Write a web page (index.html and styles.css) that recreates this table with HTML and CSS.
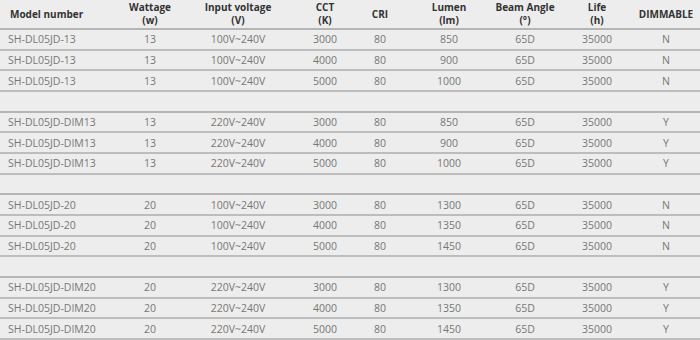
FILE: index.html
```html
<!DOCTYPE html>
<html lang="en">
<head>
  <meta charset="UTF-8">
  <title>SH-DL05JD Specifications</title>
  <link rel="stylesheet" href="styles.css">
</head>
<body>
  <table class="spec-table">
    <colgroup>
      <col class="col-model">
      <col class="col-watt">
      <col class="col-volt">
      <col class="col-cct">
      <col class="col-cri">
      <col class="col-lumen">
      <col class="col-beam">
      <col class="col-life">
      <col class="col-dim">
    </colgroup>
    <thead>
      <tr>
        <th class="model">Model number</th>
        <th>Wattage<br>(w)</th>
        <th>Input voltage<br>(V)</th>
        <th>CCT<br>(K)</th>
        <th>CRI</th>
        <th>Lumen<br>(lm)</th>
        <th>Beam Angle<br>(°)</th>
        <th>Life<br>(h)</th>
        <th>DIMMABLE</th>
      </tr>
    </thead>
    <tbody>
      <tr><td class="model">SH-DL05JD-13</td><td>13</td><td>100V~240V</td><td>3000</td><td>80</td><td>850</td><td>65D</td><td>35000</td><td>N</td></tr>
      <tr><td class="model">SH-DL05JD-13</td><td>13</td><td>100V~240V</td><td>4000</td><td>80</td><td>900</td><td>65D</td><td>35000</td><td>N</td></tr>
      <tr><td class="model">SH-DL05JD-13</td><td>13</td><td>100V~240V</td><td>5000</td><td>80</td><td>1000</td><td>65D</td><td>35000</td><td>N</td></tr>
      <tr class="spacer"><td colspan="9"></td></tr>

      <tr><td class="model">SH-DL05JD-DIM13</td><td>13</td><td>220V~240V</td><td>3000</td><td>80</td><td>850</td><td>65D</td><td>35000</td><td>Y</td></tr>
      <tr><td class="model">SH-DL05JD-DIM13</td><td>13</td><td>220V~240V</td><td>4000</td><td>80</td><td>900</td><td>65D</td><td>35000</td><td>Y</td></tr>
      <tr><td class="model">SH-DL05JD-DIM13</td><td>13</td><td>220V~240V</td><td>5000</td><td>80</td><td>1000</td><td>65D</td><td>35000</td><td>Y</td></tr>
      <tr class="spacer"><td colspan="9"></td></tr>

      <tr><td class="model">SH-DL05JD-20</td><td>20</td><td>100V~240V</td><td>3000</td><td>80</td><td>1300</td><td>65D</td><td>35000</td><td>N</td></tr>
      <tr><td class="model">SH-DL05JD-20</td><td>20</td><td>100V~240V</td><td>4000</td><td>80</td><td>1350</td><td>65D</td><td>35000</td><td>N</td></tr>
      <tr><td class="model">SH-DL05JD-20</td><td>20</td><td>100V~240V</td><td>5000</td><td>80</td><td>1450</td><td>65D</td><td>35000</td><td>N</td></tr>
      <tr class="spacer"><td colspan="9"></td></tr>

      <tr><td class="model">SH-DL05JD-DIM20</td><td>20</td><td>220V~240V</td><td>3000</td><td>80</td><td>1300</td><td>65D</td><td>35000</td><td>Y</td></tr>
      <tr><td class="model">SH-DL05JD-DIM20</td><td>20</td><td>220V~240V</td><td>4000</td><td>80</td><td>1350</td><td>65D</td><td>35000</td><td>Y</td></tr>
      <tr><td class="model">SH-DL05JD-DIM20</td><td>20</td><td>220V~240V</td><td>5000</td><td>80</td><td>1450</td><td>65D</td><td>35000</td><td>Y</td></tr>
    </tbody>
  </table>
</body>
</html>
```

FILE: styles.css
```css
body {
  margin: 0;
  padding: 0;
  background-color: #ededed;
  font-family: "Open Sans", Arial, sans-serif;
}

.spec-table {
  width: 700px;
  border-collapse: separate;
  border-spacing: 0;
  table-layout: fixed;
  background: #ededed;
}

.col-model { width: 124px; }
.col-watt { width: 52px; }
.col-volt { width: 124px; }
.col-cct { width: 50px; }
.col-cri { width: 60px; }
.col-lumen { width: 78px; }
.col-beam { width: 74px; }
.col-life { width: 70px; }
.col-dim { width: 68px; }

.spec-table th {
  height: 28px;
  padding: 0;
  font-size: 10px;
  font-weight: 700;
  line-height: 13px;
  color: #333;
  text-align: center;
  vertical-align: middle;
  border-bottom: 2px solid #b5b5b5;
  white-space: nowrap;
}

.spec-table td {
  height: 18.67px;
  padding: 0;
  font-size: 10.5px;
  line-height: 12px;
  color: #777;
  text-align: center;
  vertical-align: middle;
  border-bottom: 2px solid #bdbdbd;
  white-space: nowrap;
}

.spec-table td.model {
  text-align: left;
  padding-left: 8px;
}

.spec-table th.model {
  text-align: left;
  padding-left: 10px;
}

.spacer td {
  border-bottom-color: #b5b5b5;
}
```
